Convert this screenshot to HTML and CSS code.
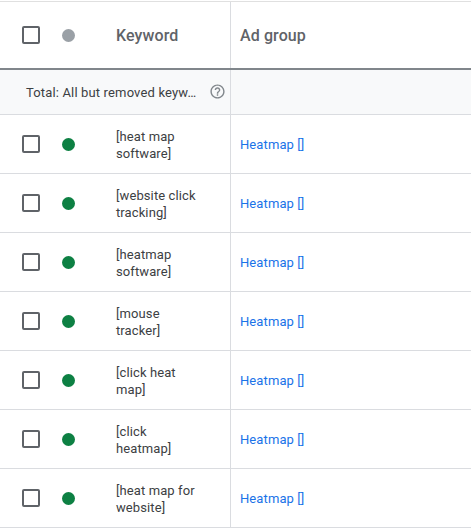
FILE: index.html
```html
<!DOCTYPE html>
<html>
<head>
<meta charset="utf-8">
<link rel="stylesheet" href="styles.css">
</head>
<body>
<div class="table">
  <div class="row header">
    <div class="left">
      <span class="checkbox"></span>
      <span class="dot gray"></span>
      <span class="htext">Keyword</span>
    </div>
    <div class="right"><span class="htext">Ad group</span></div>
  </div>
  <div class="row total">
    <div class="left">
      <span class="total-text">Total: All but removed keyw…</span>
      <svg class="help" viewBox="0 0 24 24" width="17" height="17"><path fill="#80868b" d="M11 18h2v-2h-2v2zm1-16C6.48 2 2 6.48 2 12s4.48 10 10 10 10-4.48 10-10S17.52 2 12 2zm0 18c-4.41 0-8-3.590-8-8s3.59-8 8-8 8 3.59 8 8-3.59 8-8 8zm0-14c-2.21 0-4 1.79-4 4h2c0-1.1.9-2 2-2s2 .9 2 2c0 2-3 1.75-3 5h2c0-2.25 3-2.5 3-5 0-2.21-1.79-4-4-4z"/></svg>
    </div>
    <div class="right"></div>
  </div>
  <div class="row data">
    <div class="left"><span class="checkbox"></span><span class="dot green"></span><span class="kw">[heat map software]</span></div>
    <div class="right"><a class="link">Heatmap []</a></div>
  </div>
  <div class="row data">
    <div class="left"><span class="checkbox"></span><span class="dot green"></span><span class="kw">[website click tracking]</span></div>
    <div class="right"><a class="link">Heatmap []</a></div>
  </div>
  <div class="row data">
    <div class="left"><span class="checkbox"></span><span class="dot green"></span><span class="kw">[heatmap software]</span></div>
    <div class="right"><a class="link">Heatmap []</a></div>
  </div>
  <div class="row data">
    <div class="left"><span class="checkbox"></span><span class="dot green"></span><span class="kw">[mouse tracker]</span></div>
    <div class="right"><a class="link">Heatmap []</a></div>
  </div>
  <div class="row data">
    <div class="left"><span class="checkbox"></span><span class="dot green"></span><span class="kw">[click heat map]</span></div>
    <div class="right"><a class="link">Heatmap []</a></div>
  </div>
  <div class="row data">
    <div class="left"><span class="checkbox"></span><span class="dot green"></span><span class="kw">[click heatmap]</span></div>
    <div class="right"><a class="link">Heatmap []</a></div>
  </div>
  <div class="row data">
    <div class="left"><span class="checkbox"></span><span class="dot green"></span><span class="kw">[heat map for website]</span></div>
    <div class="right"><a class="link">Heatmap []</a></div>
  </div>
</div>
</body>
</html>
```
FILE: styles.css
```css
html, body {
  margin: 0;
  padding: 0;
  background: #fff;
}
body {
  font-family: Roboto, "Liberation Sans", Arial, sans-serif;
  color: #3c4043;
}
.table {
  margin-top: 1px;
  border-top: 1px solid #e0e0e0;
  width: 471px;
}
.row {
  display: flex;
  border-bottom: 1px solid #dadce0;
}
.left {
  flex: none;
  display: flex;
  align-items: center;
  border-right: 1px solid #dadce0;
  box-sizing: border-box;
  width: 231px;
}
.right {
  flex: 1;
  display: flex;
  align-items: center;
  padding-left: 9px;
}
.header {
  height: 66px;
  border-bottom: 2px solid #80868b;
}
.total {
  height: 44px;
  background: #f8f9fa;
}
.data {
  height: 58px;
}
.checkbox {
  width: 18px;
  height: 18px;
  box-sizing: border-box;
  border: 2px solid #5f6368;
  border-radius: 2px;
  margin-left: 22px;
  flex: none;
}
.dot {
  width: 13px;
  height: 13px;
  border-radius: 50%;
  margin-left: 22px;
  flex: none;
}
.dot.gray { background: #9aa0a6; }
.dot.green { background: #0d8043; }
.header .htext {
  font-size: 16px;
  font-weight: 500;
  color: #5f6368;
  letter-spacing: 0.1px;
}
.header .left .htext {
  margin-left: 41px;
}
.total-text {
  font-size: 13px;
  margin-left: 26px;
  color: #3c4043;
  white-space: nowrap;
  letter-spacing: 0.15px;
}
.help {
  margin-left: auto;
  margin-right: 4px;
  margin-top: -2px;
  flex: none;
}
.kw {
  margin-left: 41px;
  width: 86px;
  font-size: 13px;
  line-height: 17px;
  color: #3c4043;
  margin-top: 2px;
  letter-spacing: 0.1px;
}
.link {
  font-size: 13px;
  color: #1a73e8;
  text-decoration: none;
  letter-spacing: 0.1px;
}
```
